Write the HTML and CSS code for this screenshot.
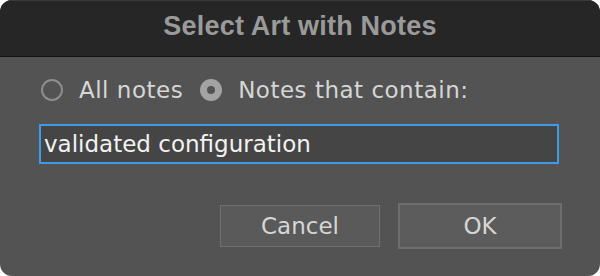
FILE: index.html
```html
<!DOCTYPE html>
<html lang="en">
<head>
	<meta charset="UTF-8">
	<title>Select Art with Notes</title>
	<link rel="stylesheet" href="styles.css">
</head>
<body>
	<div class="dialog">
		<div class="titlebar">Select Art with Notes</div>
		<div class="content">
			<div class="radio-row">
				<label class="radio">
					<span class="dot"></span>
					<span>All notes</span>
				</label>
				<label class="radio checked">
					<span class="dot"></span>
					<span>Notes that contain:</span>
				</label>
			</div>
			<div class="field">validated configuration</div>
			<div class="buttons">
				<div class="btn">Cancel</div>
				<div class="btn btn-default">OK</div>
			</div>
		</div>
	</div>
</body>
</html>
```

FILE: styles.css
```css
*{
	margin:0;
	padding:0;
	box-sizing: border-box;
}
body{
	background-color: #fff;
	font-family: "DejaVu Sans", sans-serif;
}
.dialog{
	width: 600px;
	height: 276px;
	border-radius: 12px;
	overflow: hidden;
	background-color: #535353;
	display: flex;
	flex-direction: column;
}
.titlebar{
	height: 57px;
	background-color: #262626;
	border-top: 1px solid #3a3a3a;
	border-bottom: 1px solid #111;
	color: #9a9a9a;
	font-family: "Liberation Sans", Arial, sans-serif;
	font-weight: bold;
	font-size: 27px;
	letter-spacing: 0.2px;
	text-align: center;
	line-height: 51px;
}
.content{
	padding: 19px 39px 0 41px;
}
.radio-row{
	display: flex;
	align-items: center;
	gap: 17px;
	height: 28px;
}
.radio{
	display: flex;
	align-items: center;
	gap: 16px;
	color: #d6d6d6;
	font-size: 23px;
	letter-spacing: 0.5px;
}
.dot{
	width: 22px;
	height: 22px;
	border-radius: 50%;
	border: 2px solid #8e8e8e;
	display: flex;
	align-items: center;
	justify-content: center;
}
.radio.checked .dot{
	border: none;
	background-color: #a3a3a3;
}
.radio.checked .dot::after{
	content: "";
	width: 8px;
	height: 8px;
	border-radius: 50%;
	background-color: #535353;
}
.field{
	margin-top: 20px;
	margin-left: -2px;
	width: 520px;
	height: 40px;
	border: 2px solid #3f9be6;
	background-color: #454545;
	color: #f2f2f2;
	font-size: 23px;
	line-height: 36px;
	padding-left: 3px;
}
.buttons{
	display: flex;
	justify-content: flex-end;
	align-items: center;
	gap: 18px;
	margin-top: 39px;
	margin-right: -1px;
}
.btn{
	width: 160px;
	height: 42px;
	border: 1px solid #717171;
	background-color: #5a5a5a;
	color: #d6d6d6;
	font-size: 23px;
	text-align: center;
	line-height: 40px;
}
.btn-default{
	width: 164px;
	height: 46px;
	border: 2px solid #6f6f6f;
	background-color: #5c5c5c;
	line-height: 42px;
}
```
